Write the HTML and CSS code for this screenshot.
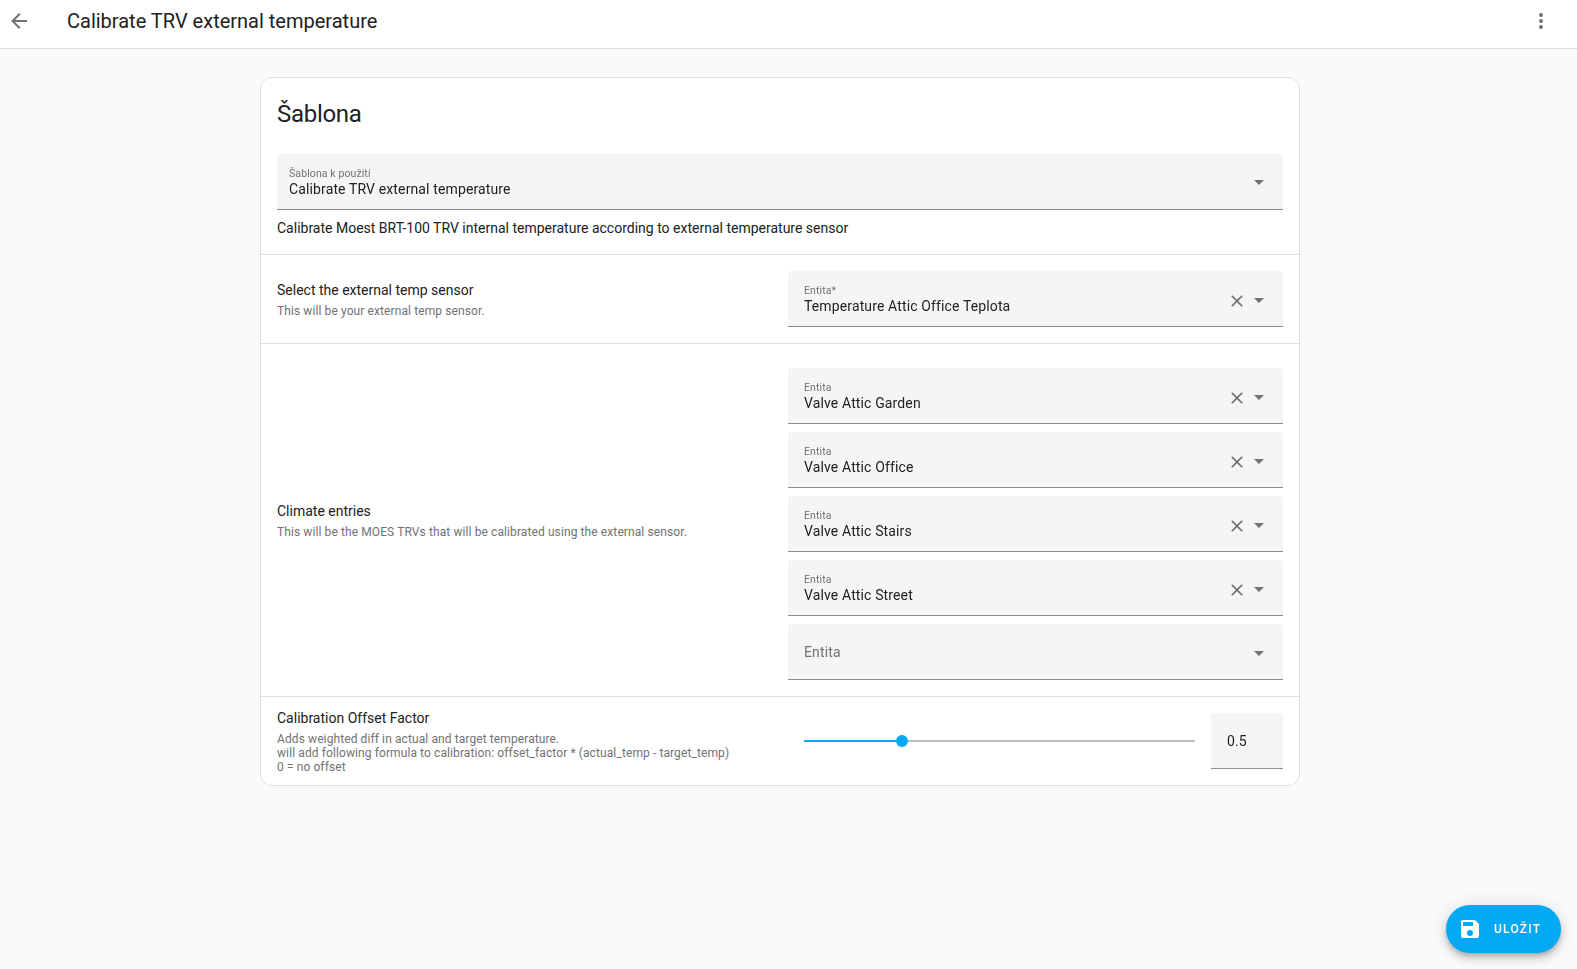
FILE: index.html
```html
<!DOCTYPE html>
<html lang="cs">
<head>
<meta charset="utf-8">
<title>Calibrate TRV external temperature</title>
<link rel="stylesheet" href="styles.css">
</head>
<body>
<header class="topbar">
  <button class="icon-btn" aria-label="Zpět"><svg viewBox="0 0 24 24"><path d="M20,11V13H8L13.5,18.5L12.08,19.92L4.16,12L12.08,4.08L13.5,5.5L8,11H20Z"/></svg></button>
  <h1 class="topbar-title">Calibrate TRV external temperature</h1>
  <button class="icon-btn" aria-label="Menu"><svg viewBox="0 0 24 24"><path d="M12,16A2,2 0 0,1 14,18A2,2 0 0,1 12,20A2,2 0 0,1 10,18A2,2 0 0,1 12,16M12,10A2,2 0 0,1 14,12A2,2 0 0,1 12,14A2,2 0 0,1 10,12A2,2 0 0,1 12,10M12,4A2,2 0 0,1 14,6A2,2 0 0,1 12,8A2,2 0 0,1 10,6A2,2 0 0,1 12,4Z"/></svg></button>
</header>
<main class="page">
  <section class="card">
    <div class="card-top">
      <h2 class="card-title">Šablona</h2>
      <div class="field field-compact">
        <div class="field-text">
          <span class="field-label">Šablona k použití</span>
          <span class="field-value">Calibrate TRV external temperature</span>
        </div>
        <svg class="caret caret-top" viewBox="0 0 24 24"><path d="M7,10L12,15L17,10H7Z"/></svg>
      </div>
      <p class="card-desc">Calibrate Moest BRT-100 TRV internal temperature according to external temperature sensor</p>
    </div>

    <div class="row">
      <div class="row-info">
        <div class="row-title">Select the external temp sensor</div>
        <div class="row-sub">This will be your external temp sensor.</div>
      </div>
      <div class="row-control">
        <div class="field">
          <div class="field-text">
            <span class="field-label">Entita*</span>
            <span class="field-value">Temperature Attic Office Teplota</span>
          </div>
          <svg class="clear" viewBox="0 0 24 24"><path d="M19,6.41L17.59,5L12,10.59L6.41,5L5,6.41L10.59,12L5,17.59L6.41,19L12,13.41L17.59,19L19,17.59L13.41,12L19,6.41Z"/></svg>
          <svg class="caret" viewBox="0 0 24 24"><path d="M7,10L12,15L17,10H7Z"/></svg>
        </div>
      </div>
    </div>

    <div class="row">
      <div class="row-info">
        <div class="row-title">Climate entries</div>
        <div class="row-sub">This will be the MOES TRVs that will be calibrated using the external sensor.</div>
      </div>
      <div class="row-control stack">
        <div class="field">
          <div class="field-text"><span class="field-label">Entita</span><span class="field-value">Valve Attic Garden</span></div>
          <svg class="clear" viewBox="0 0 24 24"><path d="M19,6.41L17.59,5L12,10.59L6.41,5L5,6.41L10.59,12L5,17.59L6.41,19L12,13.41L17.59,19L19,17.59L13.41,12L19,6.41Z"/></svg>
          <svg class="caret" viewBox="0 0 24 24"><path d="M7,10L12,15L17,10H7Z"/></svg>
        </div>
        <div class="field">
          <div class="field-text"><span class="field-label">Entita</span><span class="field-value">Valve Attic Office</span></div>
          <svg class="clear" viewBox="0 0 24 24"><path d="M19,6.41L17.59,5L12,10.59L6.41,5L5,6.41L10.59,12L5,17.59L6.41,19L12,13.41L17.59,19L19,17.59L13.41,12L19,6.41Z"/></svg>
          <svg class="caret" viewBox="0 0 24 24"><path d="M7,10L12,15L17,10H7Z"/></svg>
        </div>
        <div class="field">
          <div class="field-text"><span class="field-label">Entita</span><span class="field-value">Valve Attic Stairs</span></div>
          <svg class="clear" viewBox="0 0 24 24"><path d="M19,6.41L17.59,5L12,10.59L6.41,5L5,6.41L10.59,12L5,17.59L6.41,19L12,13.41L17.59,19L19,17.59L13.41,12L19,6.41Z"/></svg>
          <svg class="caret" viewBox="0 0 24 24"><path d="M7,10L12,15L17,10H7Z"/></svg>
        </div>
        <div class="field">
          <div class="field-text"><span class="field-label">Entita</span><span class="field-value">Valve Attic Street</span></div>
          <svg class="clear" viewBox="0 0 24 24"><path d="M19,6.41L17.59,5L12,10.59L6.41,5L5,6.41L10.59,12L5,17.59L6.41,19L12,13.41L17.59,19L19,17.59L13.41,12L19,6.41Z"/></svg>
          <svg class="caret" viewBox="0 0 24 24"><path d="M7,10L12,15L17,10H7Z"/></svg>
        </div>
        <div class="field field-empty">
          <div class="field-text"><span class="field-placeholder">Entita</span></div>
          <svg class="caret" viewBox="0 0 24 24"><path d="M7,10L12,15L17,10H7Z"/></svg>
        </div>
      </div>
    </div>

    <div class="row">
      <div class="row-info">
        <div class="row-title">Calibration Offset Factor</div>
        <div class="row-sub">Adds weighted diff in actual and target temperature.<br>will add following formula to calibration: offset_factor * (actual_temp - target_temp)<br>0 = no offset</div>
      </div>
      <div class="row-control slider-control">
        <div class="slider">
          <div class="slider-fill"></div>
          <div class="slider-thumb"></div>
          <div class="slider-rest"></div>
        </div>
        <div class="number-box"><span class="number-value">0.5</span></div>
      </div>
    </div>
  </section>
</main>
<button class="fab">
  <svg viewBox="0 0 24 24"><path d="M15,9H5V5H15M12,19A3,3 0 0,1 9,16A3,3 0 0,1 12,13A3,3 0 0,1 15,16A3,3 0 0,1 12,19M17,3H5C3.89,3 3,3.9 3,5V19A2,2 0 0,0 5,21H19A2,2 0 0,0 21,19V7L17,3Z"/></svg>
  <span>ULOŽIT</span>
</button>
</body>
</html>
```

FILE: styles.css
```css
* { box-sizing: border-box; }
html, body { margin: 0; height: 100%; }
body {
  background: #fafafa;
  color: #212121;
  font-family: Roboto, "Noto Sans", sans-serif;
  font-size: 14px;
  overflow: hidden;
}
.topbar {
  height: 49px;
  background: #fff;
  border-bottom: 1px solid #e0e0e0;
  display: flex;
  align-items: center;
  padding: 0 17px 0 0;
}
.icon-btn {
  width: 38px;
  height: 48px;
  margin: -6px 0 0 0;
  border: 0;
  padding: 0;
  background: none;
  display: flex;
  align-items: center;
  justify-content: center;
}
.icon-btn svg { width: 24px; height: 24px; fill: #727272; }
.topbar-title {
  flex: 1;
  margin: -6px 0 0 29px;
  font-size: 20px;
  font-weight: 400;
  line-height: 28px;
}
.page {
  display: flex;
  justify-content: center;
  padding: 28px 17px 0 0;
}
.card {
  width: 1040px;
  background: #fff;
  border: 1px solid #e0e0e0;
  border-radius: 12px;
}
.card-top { padding: 16px; }
.card-title {
  margin: 0;
  font-size: 24px;
  font-weight: 400;
  letter-spacing: -.288px;
  line-height: 40px;
  height: 60px;
}
.card-desc {
  margin: 8px 0 0;
  font-size: 14px;
  line-height: 20px;
}
.row {
  display: flex;
  align-items: center;
  padding: 0 16px;
  border-top: 1px solid #e0e0e0;
}
.row-info { flex: 1; min-width: 0; padding: 8px 0 9px; }
.row-title { font-size: 14px; line-height: 20px; }
.row-sub { font-size: 12px; line-height: 14px; letter-spacing: .1px; color: #727272; margin-top: 4px; }
.row-control { width: 495px; flex: none; padding: 16px 0; }
.stack { display: flex; flex-direction: column; gap: 8px; padding-top: 24px; }
.field {
  height: 56px;
  background: #f5f5f5;
  border-bottom: 1px solid #8c8c8c;
  border-radius: 4px 4px 0 0;
  display: flex;
  align-items: center;
  padding: 0 12px 0 16px;
}
.field-compact { padding-left: 12px; }
.field-text { flex: 1; display: flex; flex-direction: column; min-width: 0; will-change: transform; }
.field-label { font-size: 10.5px; line-height: 16px; letter-spacing: .1px; color: #727272; }
.field-value { font-size: 14px; line-height: 18px; letter-spacing: .13px; margin-top: -2px; }
.field-placeholder { font-size: 14px; line-height: 20px; letter-spacing: .13px; color: #727272; }
.clear { width: 20px; height: 20px; fill: #727272; margin-top: 4px; }
.caret { width: 24px; height: 24px; fill: #727272; margin-top: 2px; }
.caret-top { margin-top: 0; }
.slider-control { display: flex; align-items: center; }
.slider {
  flex: 1;
  margin: 0 16px;
  display: flex;
  align-items: center;
}
.slider-fill { width: 92px; height: 2px; background: #03a9f4; }
.slider-thumb { width: 12px; height: 12px; border-radius: 50%; background: #03a9f4; flex: none; }
.slider-rest { flex: 1; height: 2px; background: #bdbdbd; }
.number-box {
  width: 72px;
  height: 56px;
  flex: none;
  background: #f5f5f5;
  border-bottom: 1px solid #8c8c8c;
  border-radius: 4px 4px 0 0;
  display: flex;
  align-items: center;
  padding-left: 16px;
  font-size: 14px;
  letter-spacing: .13px;
}
.number-value { will-change: transform; }
.fab {
  position: fixed;
  right: 16px;
  bottom: 16px;
  width: 115px;
  height: 48px;
  border: 0;
  border-radius: 24px;
  background: #03a9f4;
  color: #fff;
  display: flex;
  align-items: center;
  padding: 0 20px 0 12px;
  gap: 12px;
  font-family: Roboto, sans-serif;
  font-size: 12px;
  font-weight: 500;
  letter-spacing: 1.25px;
  box-shadow: 0 3px 5px -1px rgba(0,0,0,.2), 0 6px 10px 0 rgba(0,0,0,.14), 0 1px 18px 0 rgba(0,0,0,.12);
}
.fab svg { width: 24px; height: 24px; fill: #fff; flex: none; }
```
